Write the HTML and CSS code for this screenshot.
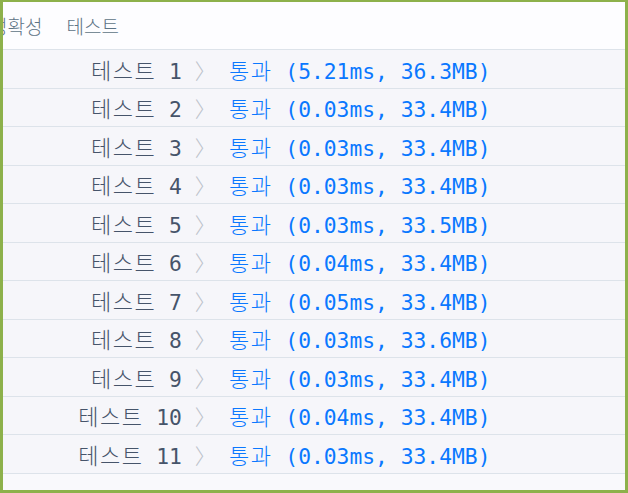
FILE: index.html
```html
<!DOCTYPE html>
<html lang="ko">
<head>
<meta charset="utf-8">
<link rel="stylesheet" href="styles.css">
</head>
<body>
<div class="frame">
  <div class="tabs">
    <span class="tab">정확성</span>
    <span class="tab">테스트</span>
  </div>
  <div class="results">
    <div class="row"><span class="title"><span class="ko">테스트</span> 1 <span class="chev">〉</span></span><span class="pass"><span class="ko">통과</span> (5.21ms, 36.3MB)</span></div>
    <div class="row"><span class="title"><span class="ko">테스트</span> 2 <span class="chev">〉</span></span><span class="pass"><span class="ko">통과</span> (0.03ms, 33.4MB)</span></div>
    <div class="row"><span class="title"><span class="ko">테스트</span> 3 <span class="chev">〉</span></span><span class="pass"><span class="ko">통과</span> (0.03ms, 33.4MB)</span></div>
    <div class="row"><span class="title"><span class="ko">테스트</span> 4 <span class="chev">〉</span></span><span class="pass"><span class="ko">통과</span> (0.03ms, 33.4MB)</span></div>
    <div class="row"><span class="title"><span class="ko">테스트</span> 5 <span class="chev">〉</span></span><span class="pass"><span class="ko">통과</span> (0.03ms, 33.5MB)</span></div>
    <div class="row"><span class="title"><span class="ko">테스트</span> 6 <span class="chev">〉</span></span><span class="pass"><span class="ko">통과</span> (0.04ms, 33.4MB)</span></div>
    <div class="row"><span class="title"><span class="ko">테스트</span> 7 <span class="chev">〉</span></span><span class="pass"><span class="ko">통과</span> (0.05ms, 33.4MB)</span></div>
    <div class="row"><span class="title"><span class="ko">테스트</span> 8 <span class="chev">〉</span></span><span class="pass"><span class="ko">통과</span> (0.03ms, 33.6MB)</span></div>
    <div class="row"><span class="title"><span class="ko">테스트</span> 9 <span class="chev">〉</span></span><span class="pass"><span class="ko">통과</span> (0.03ms, 33.4MB)</span></div>
    <div class="row"><span class="title"><span class="ko">테스트</span> 10 <span class="chev">〉</span></span><span class="pass"><span class="ko">통과</span> (0.04ms, 33.4MB)</span></div>
    <div class="row"><span class="title"><span class="ko">테스트</span> 11 <span class="chev">〉</span></span><span class="pass"><span class="ko">통과</span> (0.03ms, 33.4MB)</span></div>
  </div>
</div>
</body>
</html>
```
FILE: styles.css
```css
html, body {
  margin: 0;
  padding: 0;
  overflow: hidden;
}
body {
  width: 628px;
  height: 493px;
}
.frame {
  box-sizing: border-box;
  width: 628px;
  height: 493px;
  border: 3px solid #8db14b;
  border-top-width: 2px;
  background: #f9f9fc;
  overflow: hidden;
}
.tabs {
  display: flex;
  align-items: center;
  gap: 24px;
  height: 47px;
  margin-left: -13px;
  background: #fdfdff;
  border-bottom: 1px solid #dde3ea;
  font-family: "Noto Sans CJK KR", "Noto Sans", sans-serif;
  font-size: 19px;
  font-weight: 300;
  color: #5d7486;
}
.tab {
  line-height: 1;
}
.results {
  font-family: "DejaVu Sans Mono", "Noto Sans CJK KR", monospace;
  font-size: 21.3px;
  font-weight: 300;
}
.row {
  display: grid;
  grid-template-columns: 213px 1fr;
  column-gap: 13px;
  align-items: center;
  height: 37.5px;
  background: #f6f6fa;
  border-bottom: 1px solid #dde3ea;
  white-space: pre;
}
.ko {
  font-family: "Noto Sans CJK KR", sans-serif;
  font-size: 22px;
  letter-spacing: 1.5px;
}
.title {
  text-align: right;
  color: #46546a;
}
.chev {
  color: #bcc2ca;
}
.pass {
  color: #0a78ff;
}
```
